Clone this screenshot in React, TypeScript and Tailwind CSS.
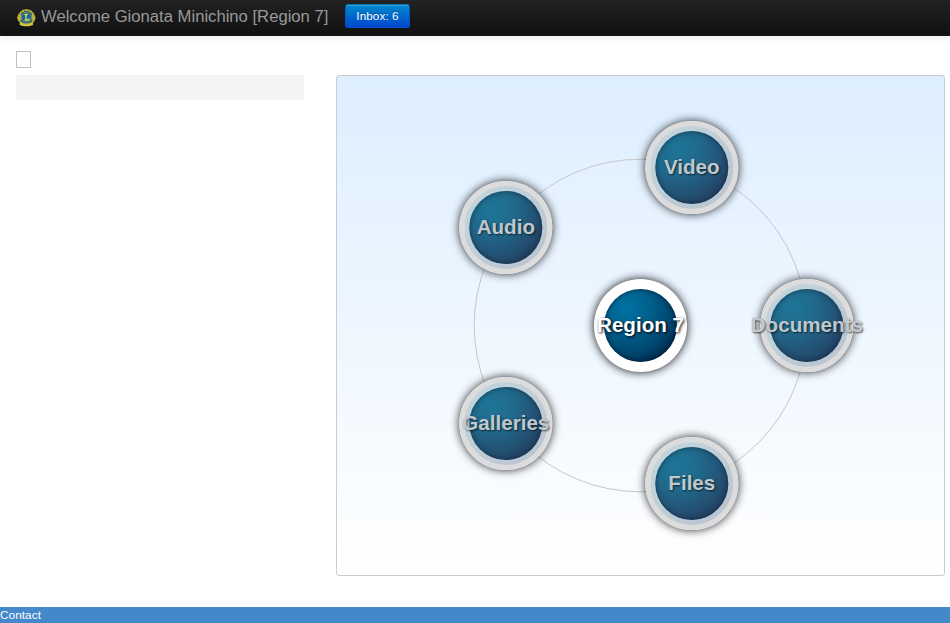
type Node = { label: string; left: number; top: number };

const orbit: Node[] = [
  { label: 'Video', left: 308, top: 45 },
  { label: 'Documents', left: 423, top: 203 },
  { label: 'Files', left: 308, top: 361 },
  { label: 'Galleries', left: 122, top: 301 },
  { label: 'Audio', left: 122, top: 105 },
];

function Emblem() {
  return (
    <svg width="20" height="20" viewBox="0 0 20 20" className="shrink-0">
      <circle cx="10.4" cy="9.6" r="7.6" fill="#35616a" stroke="#c4ba35" strokeWidth="1.8" strokeDasharray="2.4 .4" />
      <path d="M3 5.500 1 9.500 2.200 13l3-1.500V7zM17.600 5.500l2 4L18.600 13l-3-1.500V7z" fill="#b9b13a" />
      <path d="M4 14.200c3.500 1.800 9.300 1.800 12.800 0l.4 2.800c-4 1.800-9.800 1.800-13.600 0z" fill="#cfc540" />
      <circle cx="10.4" cy="9.300" r="5" fill="#1463a8" stroke="#9fa653" strokeWidth=".6" />
      <path d="M8.500 6.500h3.200M8.500 12.200h4.300v-1.800M10 6.500v5.700" fill="none" stroke="#efe03c" strokeWidth="1.300" />
    </svg>
  );
}

function OrbitNode({ node }: { node: Node }) {
  return (
    <div
      className="absolute flex size-[93px] translate-x-[0.3px] items-center justify-center rounded-full border-[5px] border-[#dcdcdd] bg-linear-to-br from-[#c5d9df] to-[#b8c1ce] bg-origin-border shadow-[0_0_10px_rgba(0,0,0,0.85)]"
      style={{ left: node.left, top: node.top }}
    >
      <div className="flex size-[73px] shrink-0 items-center justify-center rounded-full bg-[radial-gradient(circle_at_30%_26%,#1e7597_0%,#206a8c_30%,#235173_62%,#223a5c_85%,#202f4c_100%)] shadow-[inset_0_0_5px_rgba(10,35,55,0.7)]">
        <span className="relative -top-px whitespace-nowrap text-[20.6px] leading-6 font-bold text-[#bfc8ce] [text-shadow:1px_1px_2px_rgba(0,0,0,0.65)]">{node.label}</span>
      </div>
    </div>
  );
}

export default function App() {
  return (
    <div className="flex h-[623px] w-full flex-col overflow-hidden bg-white font-['Liberation_Sans',Arial,sans-serif]">
      <header className="relative flex h-9 shrink-0 items-start border-b border-[#151515] bg-linear-to-b from-[#222222] to-[#111111] pl-4 shadow-[0_1px_8px_rgba(0,0,0,0.1)]">
        <div className="mt-2 flex items-center">
          <Emblem />
        </div>
        <span className="mt-1.5 ml-[5px] w-[304px] whitespace-nowrap text-[16.65px] leading-[22px] text-[#999999]">Welcome Gionata Minichino [Region 7]</span>
        <button className="mt-1 h-6 w-[65px] rounded-[3px] border border-[#0055cc] border-t-[#0077bb] bg-linear-to-b from-[#0088cc] to-[#0044cc] text-[11.7px] leading-[22px] tracking-[0.1px] text-white shadow-[inset_0_1px_0_rgba(255,255,255,0.2)] [text-shadow:0_-1px_0_rgba(0,0,0,0.25)]">Inbox: 6</button>
      </header>
      <main className="flex min-h-0 flex-1">
        <aside className="ml-4 w-[288px] pt-[15px]">
          <div className="h-[17px] w-[15px] border border-[#c0c0c0]" />
          <div className="mt-[7px] h-[25px] bg-[#f4f4f4]" />
        </aside>
        <section className="relative mt-[39px] ml-8 h-[501px] w-[609px] rounded-[3px] border border-[#cccccc] bg-linear-to-b from-[#ddeeff] to-white">
          <svg className="absolute inset-0" width="607" height="499" viewBox="0 0 607 499">
            <circle cx="303.5" cy="249.5" r="166.3" fill="none" stroke="#cccccc" strokeWidth="1" />
          </svg>
          {orbit.map((node) => (
            <OrbitNode key={node.label} node={node} />
          ))}
          <svg className="pointer-events-none absolute inset-0" width="607" height="499" viewBox="0 0 607 499">
            <circle cx="303.5" cy="249.5" r="166.3" fill="none" stroke="#334c5e" strokeOpacity=".04" />
          </svg>
          <div className="absolute top-[203px] left-[257px] flex size-[93px] items-center justify-center rounded-full bg-white shadow-[0_0_10px_rgba(0,0,0,0.95)]">
            <div className="flex size-[73px] shrink-0 items-center justify-center rounded-full bg-[radial-gradient(circle_at_30%_26%,#0072a3_0%,#00628e_30%,#00466e_62%,#002449_85%,#001838_100%)] shadow-[inset_0_0_5px_rgba(0,10,30,0.7)]">
              <span className="relative -top-px whitespace-nowrap text-[20.6px] leading-6 font-bold text-white [text-shadow:1px_1px_3px_#000]">Region 7</span>
            </div>
          </div>
        </section>
      </main>
      <footer className="h-4 shrink-0 bg-[#4488cc] text-[11.7px] leading-4 tracking-[0.1px] text-white">Contact</footer>
    </div>
  );
}
